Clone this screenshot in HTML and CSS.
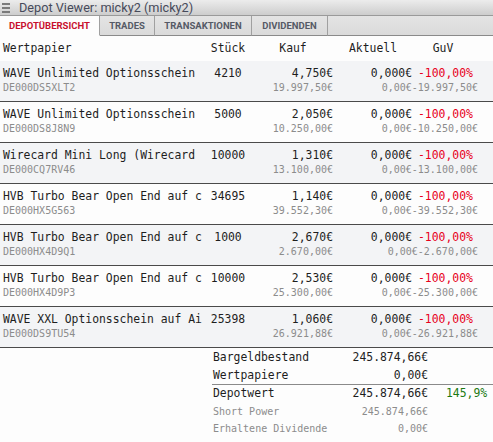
FILE: index.html
```html
<!DOCTYPE html>
<html lang="de">
<head>
<meta charset="utf-8">
<title>Depot Viewer</title>
<link rel="stylesheet" href="styles.css">
</head>
<body>
<div class="app">
  <div class="titlebar">
    <span class="menu"><i></i><i></i><i></i></span>
    <span class="title">Depot Viewer: micky2 (micky2)</span>
  </div>
  <div class="tabs">
    <div class="tab active t1">DEPOTÜBERSICHT</div>
    <div class="tab t2">TRADES</div>
    <div class="tab t3">TRANSAKTIONEN</div>
    <div class="tab t4">DIVIDENDEN</div>
    <div class="tabfill"></div>
  </div>
  <div class="table">
    <div class="head">
      <div class="h-name">Wertpapier</div>
      <div class="h-c">Stück</div>
      <div class="h-c">Kauf</div>
      <div class="h-c">Aktuell</div>
      <div class="h-c">GuV</div>
    </div>

    <div class="row">
      <div class="name">WAVE Unlimited Optionsschein</div>
      <div class="qty">4210</div>
      <div class="buy">4,750€</div>
      <div class="cur">0,000€</div>
      <div class="guv">-100,00%</div>
      <div class="isin">DE000DS5XLT2</div>
      <div class="buy-sub">19.997,50€</div>
      <div class="guv-sub">0,00€-19.997,50€</div>
    </div>

    <div class="row">
      <div class="name">WAVE Unlimited Optionsschein</div>
      <div class="qty">5000</div>
      <div class="buy">2,050€</div>
      <div class="cur">0,000€</div>
      <div class="guv">-100,00%</div>
      <div class="isin">DE000DS8J8N9</div>
      <div class="buy-sub">10.250,00€</div>
      <div class="guv-sub">0,00€-10.250,00€</div>
    </div>

    <div class="row">
      <div class="name">Wirecard Mini Long (Wirecard</div>
      <div class="qty">10000</div>
      <div class="buy">1,310€</div>
      <div class="cur">0,000€</div>
      <div class="guv">-100,00%</div>
      <div class="isin">DE000CQ7RV46</div>
      <div class="buy-sub">13.100,00€</div>
      <div class="guv-sub">0,00€-13.100,00€</div>
    </div>

    <div class="row">
      <div class="name">HVB Turbo Bear Open End auf c</div>
      <div class="qty">34695</div>
      <div class="buy">1,140€</div>
      <div class="cur">0,000€</div>
      <div class="guv">-100,00%</div>
      <div class="isin">DE000HX5G563</div>
      <div class="buy-sub">39.552,30€</div>
      <div class="guv-sub">0,00€-39.552,30€</div>
    </div>

    <div class="row">
      <div class="name">HVB Turbo Bear Open End auf c</div>
      <div class="qty">1000</div>
      <div class="buy">2,670€</div>
      <div class="cur">0,000€</div>
      <div class="guv">-100,00%</div>
      <div class="isin">DE000HX4D9Q1</div>
      <div class="buy-sub">2.670,00€</div>
      <div class="guv-sub">0,00€-2.670,00€</div>
    </div>

    <div class="row">
      <div class="name">HVB Turbo Bear Open End auf c</div>
      <div class="qty">10000</div>
      <div class="buy">2,530€</div>
      <div class="cur">0,000€</div>
      <div class="guv">-100,00%</div>
      <div class="isin">DE000HX4D9P3</div>
      <div class="buy-sub">25.300,00€</div>
      <div class="guv-sub">0,00€-25.300,00€</div>
    </div>

    <div class="row">
      <div class="name">WAVE XXL Optionsschein auf Ai</div>
      <div class="qty">25398</div>
      <div class="buy">1,060€</div>
      <div class="cur">0,000€</div>
      <div class="guv">-100,00%</div>
      <div class="isin">DE000DS9TU54</div>
      <div class="buy-sub">26.921,88€</div>
      <div class="guv-sub">0,00€-26.921,88€</div>
    </div>
  </div>

  <div class="summary">
    <div class="s-label">Bargeldbestand</div><div class="s-val">245.874,66€</div><div class="s-pct"></div>
    <div class="s-label">Wertpapiere</div><div class="s-val">0,00€</div><div class="s-pct"></div>
    <div class="s-rule"></div>
    <div class="s-label">Depotwert</div><div class="s-val">245.874,66€</div><div class="s-pct green">145,9%</div>
    <div class="s-label small">Short Power</div><div class="s-val small">245.874,66€</div><div class="s-pct"></div>
    <div class="s-label small">Erhaltene Dividende</div><div class="s-val small">0,00€</div><div class="s-pct"></div>
  </div>
</div>
</body>
</html>
```

FILE: styles.css
```css
html, body {
  margin: 0;
  padding: 0;
  background: #fdfdfd;
}

.app {
  width: 493px;
  height: 442px;
  overflow: hidden;
  background: #fdfdfd;
  font-family: "DejaVu Sans Mono", monospace;
  color: #1e1e1e;
}

/* title bar */
.titlebar {
  height: 15px;
  display: flex;
  align-items: center;
  background: linear-gradient(#ececec, #cdcdcd);
  border-bottom: 1px solid #9a9a9a;
}
.menu {
  display: flex;
  flex-direction: column;
  gap: 2px;
  width: 8px;
  margin-left: 2px;
  margin-right: 9px;
}
.menu i {
  display: block;
  height: 2px;
  background: #7a7a7a;
}
.title {
  font-family: Roboto, "Open Sans", sans-serif;
  font-size: 12.7px;
  color: #464a5a;
  line-height: 15px;
  white-space: nowrap;
}

/* tabs */
.tabs {
  display: flex;
  height: 20px;
  background: linear-gradient(#e4e4e4, #dadada);
}
.tab {
  box-sizing: border-box;
  height: 20px;
  font-family: Roboto, sans-serif;
  font-weight: 700;
  font-size: 9.5px;
  line-height: 20px;
  text-align: center;
  color: #555a66;
  border-right: 1px solid #a0a0a0;
  border-bottom: 1px solid #8a8a8a;
  white-space: nowrap;
}
.tab.active {
  background: #fdfdfd;
  color: #c8102e;
  border-bottom-color: transparent;
}
.t1 { width: 100px; }
.t2 { width: 55px; }
.t3 { width: 97px; }
.t4 { width: 76px; }
.tabfill {
  flex: 1;
  border-bottom: 1px solid #8a8a8a;
  box-sizing: border-box;
}

/* table */
.head,
.row {
  display: grid;
  grid-template-columns: 203px 50px 80px 80px 60px 20px;
}
.head {
  height: 25px;
  padding-top: 4px;
  box-sizing: border-box;
  font-size: 11.4px;
  line-height: 16px;
  color: #1e1e1e;
}
.h-name { padding-left: 3px; }
.h-c { text-align: center; }

.row {
  height: 41px;
  box-sizing: border-box;
  padding-top: 5px;
  border-bottom: 1px solid #4a4a4a;
  grid-template-rows: 15px 14px;
  font-size: 11.4px;
  line-height: 15px;
}
.row:nth-child(even) { background: #f3f4f6; }

.name {
  padding-left: 3px;
  white-space: nowrap;
  overflow: hidden;
}
.qty { text-align: center; }
.buy { text-align: right; }
.cur { text-align: right; padding-right: 1px; }
.guv { color: #e8001c; padding-left: 5px; white-space: nowrap; }

.isin,
.buy-sub,
.guv-sub {
  grid-row: 2;
  font-size: 10px;
  line-height: 14px;
  color: #8c8c8c;
  white-space: nowrap;
}
.isin { grid-column: 1; padding-left: 3px; }
.buy-sub { grid-column: 3; text-align: right; }
.guv-sub { grid-column: 4 / 7; text-align: right; padding-right: 15px; }

/* summary */
.summary {
  display: grid;
  grid-template-columns: 140px 76px 1fr;
  margin-left: 212px;
  padding-top: 1px;
  font-size: 11.4px;
  line-height: 17.5px;
}
.s-label { padding-left: 1px; }
.s-val { text-align: right; }
.s-pct { padding-left: 18px; }
.s-rule {
  grid-column: 1 / 4;
  height: 1px;
  background: #8a8a8a;
}
.green { color: #1b7a12; }
.small {
  font-size: 10px;
  line-height: 17px;
  color: #8c8c8c;
}
```
